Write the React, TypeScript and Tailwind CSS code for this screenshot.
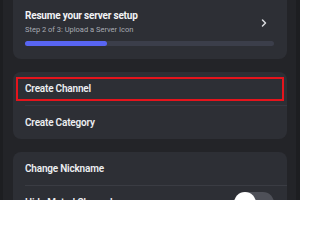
import { ChevronRight } from 'lucide-react'

const font = { fontFamily: 'Roboto, "Liberation Sans", sans-serif' }

function Row({ label, highlight }: { label: string; highlight?: boolean }) {
  return (
    <div className="relative flex h-[33px] items-center px-[12px]">
      <span className="text-[10px] font-semibold tracking-[-0.2px] text-[#eceef1]">{label}</span>
      {highlight && <span className="absolute inset-x-[3px] top-[5px] bottom-[4px] border-2 border-[#e5141c]" />}
    </div>
  )
}

export default function App() {
  return (
    <div className="h-[200px] w-[300px] overflow-hidden bg-[#232428]" style={font}>
      <div className="flex h-full border-l-[3px] border-r-[4px] border-[#1d1e21]">
        <div className="flex flex-1 flex-col gap-[13px] pl-[10px] pr-[9px]">
          <div className="rounded-b-lg bg-[#2d2f35] px-[12px] pt-[8px] pb-[13px]">
            <div className="flex items-center">
              <div className="flex-1">
                <div className="text-[10px] leading-[15px] font-bold tracking-[-0.2px] text-[#f2f3f5]">Resume your server setup</div>
                <div className="mt-[1px] text-[7.5px] leading-[11px] text-[#a8abb3]">Step 2 of 3: Upload a Server Icon</div>
              </div>
              <ChevronRight className="mr-[5px] mt-[2px] h-[12px] w-[12px] text-[#d9dbde]" strokeWidth={3} />
            </div>
            <div className="mt-[6px] mr-[1px] h-[5px] rounded-full bg-[#3b3e4a]">
              <div className="h-full w-[33%] rounded-full bg-[#5865f2]" />
            </div>
          </div>
          <div className="rounded-lg bg-[#2d2f35]">
            <Row label="Create Channel" highlight />
            <div className="ml-[12px] h-px bg-[#363840]" />
            <Row label="Create Category" />
          </div>
          <div className="rounded-lg bg-[#2d2f35]">
            <Row label="Change Nickname" />
            <div className="ml-[12px] h-px bg-[#3a3c43]" />
            <div className="flex h-[33px] items-center px-[12px]">
              <span className="flex-1 text-[10px] font-semibold tracking-[-0.2px] text-[#eceef1]">Hide Muted Channels</span>
              <div className="mr-[1px] flex h-[22px] w-[40px] items-center rounded-full bg-[#4e5058]">
                <div className="h-[22px] w-[22px] rounded-full bg-white" />
              </div>
            </div>
          </div>
        </div>
      </div>
    </div>
  )
}
